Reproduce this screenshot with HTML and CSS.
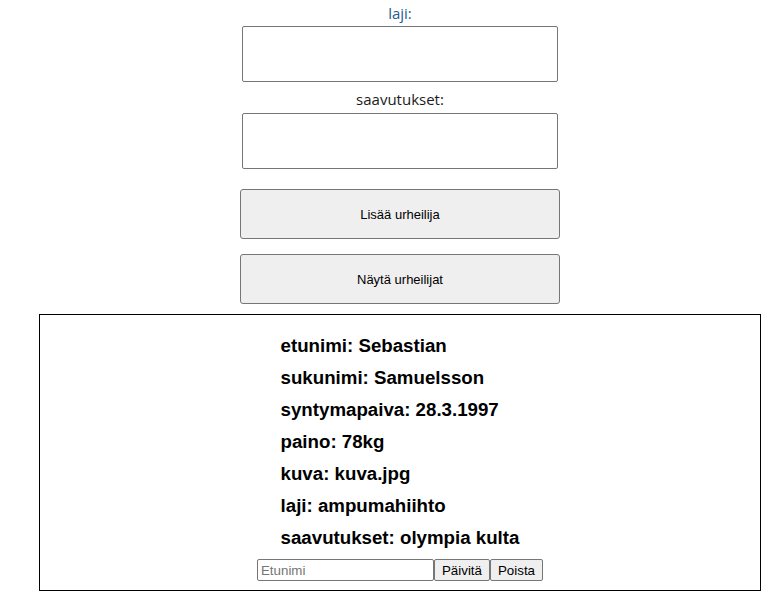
FILE: index.html
```html
<!DOCTYPE html>
<html lang="fi">
<head>
<meta charset="utf-8">
<title>Urheilijat</title>
<link rel="stylesheet" href="styles.css">
</head>
<body>
<div class="page">
  <form class="form">
    <label class="label label-blue" for="laji">laji:</label>
    <textarea class="field" id="laji"></textarea>
    <label class="label label-second" for="saavutukset">saavutukset:</label>
    <textarea class="field" id="saavutukset"></textarea>
    <button type="button" class="big-btn add-btn">Lisää urheilija</button>
    <button type="button" class="big-btn show-btn">Näytä urheilijat</button>
  </form>
  <div class="list">
    <div class="athlete">
      <div class="row">etunimi: Sebastian</div>
      <div class="row">sukunimi: Samuelsson</div>
      <div class="row">syntymapaiva: 28.3.1997</div>
      <div class="row">paino: 78kg</div>
      <div class="row">kuva: kuva.jpg</div>
      <div class="row">laji: ampumahiihto</div>
      <div class="row">saavutukset: olympia kulta</div>
    </div>
    <div class="actions">
      <input class="small-input" type="text" placeholder="Etunimi">
      <button type="button" class="small-btn">Päivitä</button>
      <button type="button" class="small-btn">Poista</button>
    </div>
  </div>
</div>
</body>
</html>
```
FILE: styles.css
```css
html, body {
  margin: 0;
  padding: 0;
  background: #ffffff;
}

.page {
  width: 722px;
  margin-left: 39px;
  font-family: "Open Sans", "Noto Sans", sans-serif;
}

.form {
  display: flex;
  flex-direction: column;
  align-items: center;
  padding-top: 2px;
}

.label {
  display: block;
  height: 22px;
  line-height: 22px;
  font-size: 15px;
  color: #1b1b1b;
  margin-bottom: 2px;
}

.label-blue {
  color: #1f5d8e;
}

.label-second {
  margin-top: 6px;
  margin-bottom: 3px;
}

.field {
  box-sizing: border-box;
  width: 316px;
  height: 56px;
  border: 1px solid #767676;
  border-radius: 2px;
  resize: none;
  margin: 0;
  padding: 2px;
  background: #fff;
}

.big-btn {
  box-sizing: border-box;
  width: 320px;
  height: 50px;
  background: #efefef;
  border: 1px solid #767676;
  border-radius: 3px;
  font-family: "Liberation Sans", Arial, sans-serif;
  font-size: 13px;
  color: #000;
  margin: 0;
  padding: 0;
}

.add-btn {
  margin-top: 20px;
}

.show-btn {
  margin-top: 15px;
}

.list {
  box-sizing: border-box;
  margin-top: 10px;
  height: 277px;
  border: 1px solid #000;
  display: flex;
  flex-direction: column;
  align-items: center;
  padding-top: 15px;
}

.athlete {
  font-family: "Liberation Sans", Arial, sans-serif;
  font-weight: bold;
  font-size: 18.7px;
  line-height: 32px;
  color: #000;
  text-align: left;
}

.actions {
  display: flex;
  margin-top: 5px;
}

.small-input {
  box-sizing: border-box;
  width: 177px;
  height: 22px;
  border: 1px solid #767676;
  border-radius: 2px;
  padding: 1px 3px;
  margin: 0;
  font-family: "Liberation Sans", Arial, sans-serif;
  font-size: 13.33px;
}

.small-input::placeholder {
  color: #757575;
}

.small-btn {
  box-sizing: border-box;
  height: 22px;
  padding: 1px 7px;
  margin: 0;
  background: #efefef;
  border: 1px solid #767676;
  border-radius: 2px;
  font-family: "Liberation Sans", Arial, sans-serif;
  font-size: 13.33px;
  color: #000;
}
```
